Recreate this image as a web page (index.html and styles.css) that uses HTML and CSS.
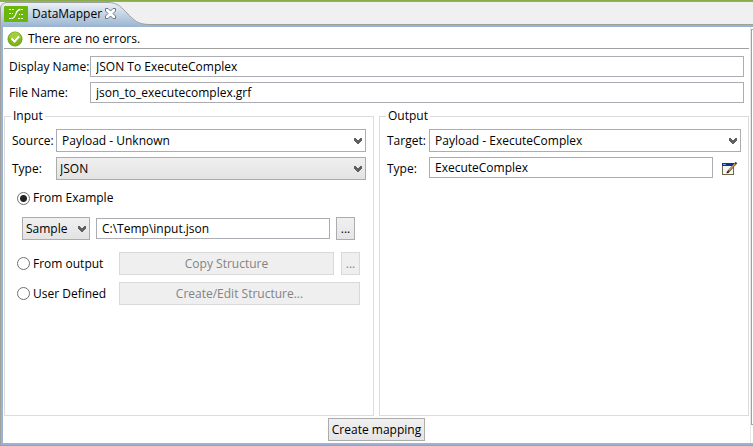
FILE: index.html
```html
<!DOCTYPE html>
<html lang="en">
<head>
<meta charset="utf-8">
<title>DataMapper</title>
<link rel="stylesheet" href="styles.css">
</head>
<body>
<svg class="defs" width="0" height="0" aria-hidden="true">
  <symbol id="chevron" viewBox="0 0 8 7"><path d="M0 0h2v1h1v1h2V1h1V0h2v3H7v1H6v1H5v1H3V5H2V4H1V3H0z" fill="#606060"/></symbol>
</svg>
<header class="tabs">
  <div class="tab">
    <svg class="tab-shape" viewBox="0 0 150 25" width="150" height="25" aria-hidden="true">
      <defs><linearGradient id="blue" x1="0" y1="0" x2="0" y2="1"><stop offset="0" stop-color="#edf2f8"/><stop offset="1" stop-color="#99b4d1"/></linearGradient></defs>
      <path d="M0 25V6Q1 1.500 6 .5H108C118 .5 122 6 127 11C134 18 137 22.500 149 22.500V25Z" fill="url(#blue)"/>
      <path d="M.5 25V6Q1 1.500 6 .5H108C118 .5 122 6 127 11C134 18 137 22.500 150 22.500" fill="none" stroke="#a0a0a0"/>
    </svg>
    <svg class="logo" viewBox="0 0 24 16" width="24" height="16" aria-hidden="true">
      <rect width="24" height="16" rx="1" fill="#6ab60b"/>
      <path d="M5 3.500h2m1 0h2M5 7.500h2m1 0h1M15 8.500h1m1 0h2M14 12.500h2m1 0h2" fill="none" stroke="#fff"/>
      <path d="M5 12.500h2M17 3.500h2" fill="none" stroke="#fff"/>
      <path d="M7.500 12.500C13 12.500 10.500 3.500 16.500 3.500" fill="none" stroke="#fff" stroke-width="1.300"/>
    </svg>
    <span class="tab-name">DataMapper</span>
    <button class="close" type="button" aria-label="Close">
      <svg viewBox="0 0 11 11" width="11" height="11"><path d="M.5.500h2.500l2.500 2.500L8 .5h2.500V3L8 5.500 10.500 8v2.500H8L5.500 8 3 10.500H.5V8L3 5.500.5 3z" fill="#fff" stroke="#6f7780"/></svg>
    </button>
  </div>
</header>
<div class="workspace">
<main class="editor">
  <div class="status">
    <svg viewBox="0 0 16 16" width="16" height="16" aria-hidden="true">
      <circle cx="8" cy="8" r="7" fill="#80b815" stroke="#6b9b16"/>
      <path d="M2 7a6 6 0 0 1 12 0Q8 9 2 7z" fill="#a4ce38"/>
      <path d="M4.500 7.500l3 3 4.500-5" fill="none" stroke="#fff" stroke-width="2"/>
    </svg>
    <span>There are no errors.</span>
  </div>
  <form class="form">
    <div class="names">
      <label for="display">Display Name:</label><input class="box" id="display" type="text" value="JSON To ExecuteComplex">
      <label for="file">File Name:</label><input class="box" id="file" type="text" value="json_to_executecomplex.grf">
    </div>
    <div class="groups">
      <fieldset>
        <legend>Input</legend>
        <div class="fields input-fields">
          <label for="source">Source:</label>
          <span class="pick"><select id="source" class="plain"><option>Payload - Unknown</option></select><svg><use href="#chevron"/></svg></span>
          <label for="type">Type:</label>
          <span class="pick"><select id="type"><option>JSON</option></select><svg><use href="#chevron"/></svg></span>
        </div>
        <div class="choices">
          <label class="radio"><input type="radio" name="origin" checked>From Example</label>
          <div class="sample">
            <span class="pick"><select aria-label="Example kind"><option>Sample</option></select><svg><use href="#chevron"/></svg></span>
            <input class="box" type="text" aria-label="Example file" value="C:\Temp\input.json">
            <button class="btn dots" type="button">...</button>
          </div>
          <div class="option">
            <label class="radio"><input type="radio" name="origin">From output</label>
            <button class="btn wide" type="button" disabled>Copy Structure</button>
            <button class="btn dots" type="button" disabled>...</button>
          </div>
          <div class="option">
            <label class="radio"><input type="radio" name="origin">User Defined</label>
            <button class="btn wide" type="button" disabled>Create/Edit Structure...</button>
          </div>
        </div>
      </fieldset>
      <fieldset>
        <legend>Output</legend>
        <div class="fields output-fields">
          <label for="target">Target:</label>
          <span class="pick"><select id="target" class="plain"><option>Payload - ExecuteComplex</option></select><svg><use href="#chevron"/></svg></span>
          <label for="outtype">Type:</label>
          <span class="edit-row"><input class="box" id="outtype" type="text" value="ExecuteComplex">
            <button class="edit" type="button" aria-label="Edit type">
              <svg viewBox="0 0 16 15" width="16" height="15">
                <rect x=".5" y="2.500" width="11" height="11" fill="#f4f6fa" stroke="#6e6a45"/>
                <path d="M0 2h12v3H0z" fill="#10308c"/><path d="M1 3h3v1H1z" fill="#7fa3e0"/>
                <path d="M5.500 11.500L14.500 1.500" stroke="#54412c" stroke-width="2.200"/>
                <path d="M7 9.500L13 3" stroke="#d79b52" stroke-width="1.300"/>
                <path d="M4.500 12.500l.5-2 1.500 1.300z" fill="#111"/>
              </svg>
            </button>
          </span>
        </div>
      </fieldset>
    </div>
    <div class="actions"><button class="btn create" type="button">Create mapping</button></div>
  </form>
</main>
<div class="gutter"></div>
</div>
</body>
</html>
```
FILE: styles.css
```css
* { box-sizing: border-box; }
body {
  margin: 0;
  min-height: 100vh;
  display: flex;
  flex-direction: column;
  background: #fff;
  box-shadow: inset 1px 0 #a0a0a0;
  color: #000;
  font: 12px/16px "Open Sans", "Noto Sans", sans-serif;
}
input, select, button { font: inherit; color: inherit; margin: 0; }
.defs { position: absolute; }

.tabs {
  flex: none;
  height: 25px;
  border-top: 1px solid #8aad4c;
  border-bottom: 1px solid #a0a0a0;
  background: #f0f0f0;
  box-shadow: inset 0 1px #a0a0a0;
}
.tab {
  position: relative;
  display: flex;
  align-items: center;
  width: 150px;
  height: 24px;
  padding: 1px 0 0 4px;
}
.tab-shape { position: absolute; left: 0; top: 1px; }
.logo, .tab-name, .close { position: relative; }
.tab-name { margin: 0 3px 0 4px; }
.close { border: 0; padding: 0; background: none; display: flex; }

.workspace {
  flex: 1;
  display: flex;
  border: 2px solid #99b4d1;
  border-right: 0;
  box-shadow: 0 1px #a0a0a0;
  margin: 0 0 1px 1px;
}
.editor {
  flex: 1;
  min-width: 0;
  display: flex;
  flex-direction: column;
  padding: 0 1px;
  border-right: 1px solid #e8e8e8;
}
.gutter {
  width: 2px;
  margin: 2px 0 18px;
  border: 1px solid #a0a0a0;
  border-right: 0;
}
.status {
  display: flex;
  align-items: center;
  gap: 5px;
  height: 22px;
  padding: 3px 3px 0;
  border-bottom: 1px solid #a0a0a0;
}
.form { flex: 1; display: flex; flex-direction: column; }
.names {
  display: grid;
  grid-template-columns: 81px 1fr;
  gap: 5px 0;
  align-items: center;
  padding: 7px 5px 5px;
}
.box {
  min-width: 0;
  width: 100%;
  height: 21px;
  padding: 0 5px;
  border: 1px solid #abadb3;
  background: #fff;
}
.groups { flex: 1; display: grid; grid-template-columns: 1fr 1fr; gap: 5px; }
fieldset {
  min-width: 0;
  margin: 0;
  padding: 5px 7px;
  border: 1px solid #dcdcdc;
}
legend { padding: 0 2px; margin-left: -1px; }
.fields { display: grid; gap: 5px 0; align-items: center; }
.input-fields { grid-template-columns: 44px 1fr; }
.output-fields { grid-template-columns: 42px 1fr; }
.pick { position: relative; display: flex; min-width: 0; }
.pick select {
  appearance: none;
  width: 100%;
  height: 23px;
  padding: 0 15px 0 3px;
  border: 1px solid #acacac;
  border-radius: 0;
  background: linear-gradient(#f0f0f0, #e3e3e3);
}
.pick .plain { padding-left: 5px; background: #fff; border-color: #abadb3; }
.pick svg {
  position: absolute;
  right: 4px;
  top: 9px;
  width: 8px;
  height: 7px;
  pointer-events: none;
}
.choices { display: grid; gap: 7px; padding: 10px 6px 0 5px; }
.radio { display: flex; align-items: center; gap: 3px; }
.radio input {
  appearance: none;
  width: 13px;
  height: 13px;
  border: 1px solid #707070;
  border-radius: 50%;
  background: #fff;
}
.radio input:checked { background: radial-gradient(circle, #222 0 3px, #fff 4px); }
.sample {
  display: grid;
  grid-template-columns: 68px 1fr 19px;
  gap: 6px;
  align-items: center;
  padding: 4px 5px 5px;
}
.option { display: flex; height: 23px; gap: 7px; }
.option .radio { width: 95px; }
.btn {
  height: 23px;
  padding: 0 3px;
  border: 1px solid #acacac;
  background: linear-gradient(#f0f0f0, #e5e5e5);
}
.btn:disabled { color: #838383; border-color: #d9d9d9; background: #efefef; }
.wide { flex: 1; }
.dots { width: 19px; padding: 0; }
.edit-row { display: flex; align-items: flex-start; gap: 9px; height: 23px; padding-right: 3px; }
.edit { border: 0; padding: 4px 0 0; background: none; display: flex; }
.actions { display: flex; justify-content: center; padding: 2px; }
```
